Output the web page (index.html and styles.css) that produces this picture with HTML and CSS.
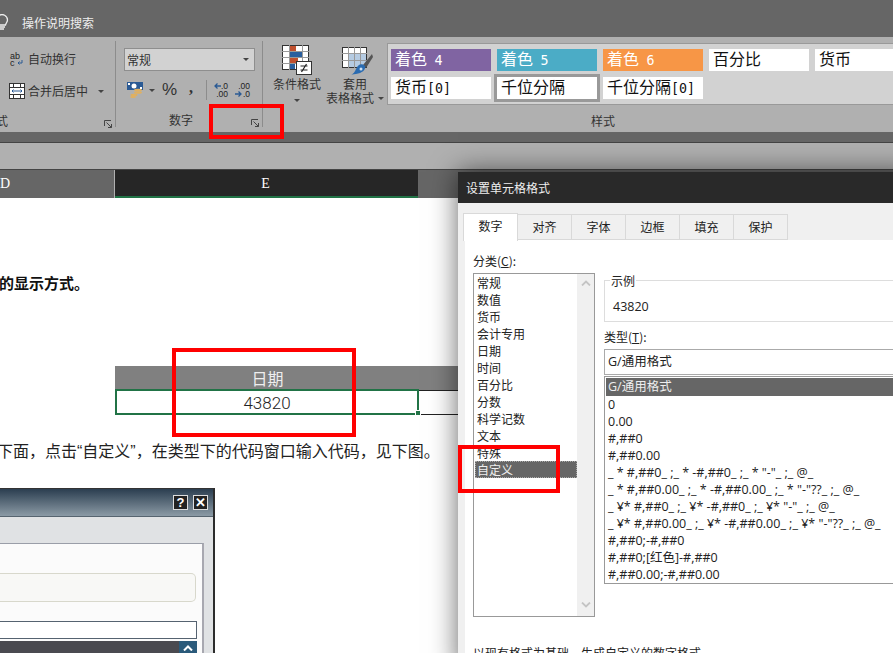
FILE: index.html
```html
<!DOCTYPE html>
<html lang="zh-CN">
<head>
<meta charset="utf-8">
<title>设置单元格格式</title>
<link rel="stylesheet" href="styles.css">
</head>
<body>
<div class="page">
  <header class="titlebar">
    <svg class="bulb" width="9" height="16" viewBox="0 0 9 16"><path d="M-1 1.500a5.500 5.500 0 0 1 8.500 4.500c0 2-1.600 3-2 5H-1" fill="none" stroke="#eee" stroke-width="1.300"/><path d="M0 13h5M0 15h4" stroke="#eee" stroke-width="1.300"/></svg>
    <span class="search">操作说明搜索</span>
  </header>

  <section class="ribbon">
    <div class="group group-align">
      <div class="align-row row-wrap">
        <svg width="15" height="16" viewBox="0 0 15 16"><text x="1" y="7.500" class="ic-t">ab</text><text x="1" y="15" class="ic-t">c</text><path d="M13 9v3H9M10.500 10.500 9 12l1.500 1.500" fill="none" stroke="#2a5a94"/></svg>
        <span>自动换行</span>
      </div>
      <div class="align-row row-merge">
        <svg width="16" height="16" viewBox="0 0 16 16"><rect x=".5" y=".5" width="15" height="15" fill="#fff" stroke="#333"/><path d="M0 4.500h16M0 11.500h16M4.500 0v4M11.500 0v4M4.500 12v4M11.500 12v4" stroke="#333"/><path d="M3 8h10M4.500 6.500 3 8l1.500 1.500M11.500 6.500 13 8l-1.500 1.500" fill="none" stroke="#2a5a94"/></svg>
        <span>合并后居中</span>
        <i class="caret caret-merge"></i>
      </div>
      <div class="group-foot foot-align"><span class="cut">式</span><svg class="launcher" width="8" height="8" viewBox="0 0 8 8"><path d="M.5 6V.5H7M2.500 2.500l5 5M4 7.500h3.500V4" fill="none" stroke="#444"/></svg></div>
    </div>

    <div class="group group-number">
      <div class="select"><span>常规</span><i class="caret"></i></div>
      <div class="num-row">
        <svg class="ic-money" width="17" height="16" viewBox="0 0 17 16"><rect width="16" height="8" fill="#2a5a94"/><circle cx="7" cy="4" r="2.500" fill="#fff"/><rect x="1" y="1" width="2" height="2" fill="#fff"/><rect x="13" y="5" width="2" height="2" fill="#fff"/><ellipse cx="11" cy="8" rx="4" ry="1.300" fill="#e0b060"/><ellipse cx="11" cy="10.500" rx="4" ry="1.300" fill="#e0b060"/><ellipse cx="7" cy="13" rx="3.500" ry="1.300" fill="#e0b060"/><ellipse cx="6" cy="15" rx="3" ry="1" fill="#e0b060"/></svg>
        <i class="caret caret-money"></i>
        <span class="pct">%</span>
        <span class="comma">,</span>
        <i class="num-sep"></i>
        <div class="dec"><span class="dec-a">.0</span><span>.00</span><svg class="dec-arrow" width="7" height="6" viewBox="0 0 7 6"><path d="M7 3H1M3.500.5 1 3l2.500 2.500" fill="none" stroke="#2a5a94" stroke-width="1.300"/></svg></div>
        <div class="dec dec-right"><span>.00</span><span class="dec-a">.0</span><svg class="dec-arrow" width="7" height="6" viewBox="0 0 7 6"><path d="M0 3h6M3.500.5 6 3 3.500 5.500" fill="none" stroke="#2a5a94" stroke-width="1.300"/></svg></div>
      </div>
      <div class="group-foot foot-number"><span>数字</span><svg class="launcher" width="8" height="8" viewBox="0 0 8 8"><path d="M.5 6V.5H7M2.500 2.500l5 5M4 7.500h3.500V4" fill="none" stroke="#444"/></svg></div>
    </div>

    <div class="group-tools">
      <div class="tool tool-cond">
        <svg width="30" height="30" viewBox="0 0 30 30"><rect x=".5" y=".5" width="26" height="24" fill="#fff" stroke="#333"/><path d="M0 6.500h27M0 12.500h27M0 18.500h27M7.500 0v25M20.500 0v25" stroke="#999"/><rect x="8" y="1" width="6" height="5" fill="#c0502e"/><rect x="8" y="7" width="12" height="5" fill="#2a5f9e"/><rect x="8" y="13" width="8" height="5" fill="#c0502e"/><rect x="8" y="19" width="5" height="5" fill="#2a5f9e"/><rect x="14.500" y="16.500" width="15" height="13" fill="#fff" stroke="#333"/><path d="M18.500 21h7M18.500 25h7M24.500 19l-5 8" stroke="#222" stroke-width="1.200" fill="none"/></svg>
        <span class="tool-l1">条件格式</span>
        <i class="caret"></i>
      </div>
      <div class="tool tool-table">
        <svg width="31" height="30" viewBox="0 0 31 30"><rect x=".5" y=".5" width="24" height="20" fill="#fff" stroke="#333"/><rect x="7" y="7" width="17" height="13" fill="#b5cbe2"/><path d="M0 6.500h25M0 13.500h25M6.500 0v21M12.500 0v21M18.500 0v21" stroke="#999"/><path d="M30 7 21 18l3 3L31 10z" fill="#555"/><path d="M14 22c2-5 6-6 9-3 1 4-3 7-9 8-3 0-5 1-5 1 2-1 4-3 5-6z" fill="#2a6bb0"/><circle cx="19" cy="22" r="1.500" fill="#cfe0f0"/></svg>
        <span class="tool-l1">套用</span>
        <span class="tool-l2">表格格式<i class="caret caret-inline"></i></span>
      </div>
    </div>

    <div class="group-styles">
      <div class="gallery">
        <span class="cell c-purple">着色 <em>4</em></span>
        <span class="cell c-blue">着色 <em>5</em></span>
        <span class="cell c-orange">着色 <em>6</em></span>
        <span class="cell">百分比</span>
        <span class="cell">货币</span>
        <span class="cell">货币<b>[0]</b></span>
        <span class="cell c-sel">千位分隔</span>
        <span class="cell">千位分隔<b>[0]</b></span>
      </div>
      <div class="styles-foot">样式</div>
    </div>
  </section>

  <div class="strip"></div>
  <div class="formula"></div>

  <div class="colhead">
    <span class="col-d">D</span>
    <span class="col-e">E</span>
  </div>

  <main class="sheet">
    <p class="lead">的显示方式。</p>
    <div class="tbl-head"><span>日期</span></div>
    <div class="tbl-row">
      <div class="tbl-cell">43820<i class="handle"></i></div>
    </div>
    <p class="note">下面，点击“自定义”，在类型下的代码窗口输入代码，见下图。</p>
    <div class="shot">
      <div class="shot-title">
        <span class="shot-btn">?</span>
        <span class="shot-btn">✕</span>
      </div>
      <div class="shot-body">
        <div class="shot-panel">
          <div class="shot-groupbox"></div>
          <div class="shot-input"></div>
          <div class="shot-list"><span class="shot-up"><svg width="10" height="6" viewBox="0 0 10 6"><path d="M1 5.500 5 1.500 9 5.500" fill="none" stroke="#fff" stroke-width="2"/></svg></span></div>
        </div>
      </div>
    </div>
  </main>

  <aside class="dialog">
    <div class="dlg-title">设置单元格格式</div>
    <div class="dlg-tabs">
      <span class="tab tab-on">数字</span>
      <span class="tab">对齐</span>
      <span class="tab">字体</span>
      <span class="tab">边框</span>
      <span class="tab">填充</span>
      <span class="tab">保护</span>
    </div>
    <div class="dlg-panel">
      <div class="dlg-cols">
        <div class="cat">
          <div class="lab">分类(<u>C</u>):</div>
          <div class="catbox">
            <ul class="catlist">
              <li>常规</li><li>数值</li><li>货币</li><li>会计专用</li><li>日期</li><li>时间</li><li>百分比</li><li>分数</li><li>科学记数</li><li>文本</li><li>特殊</li><li class="cat-on">自定义</li>
            </ul>
            <div class="scroll">
              <svg width="10" height="6" viewBox="0 0 10 6"><path d="M1 5.500 5 1.500 9 5.500" fill="none" stroke="#c4c4c4" stroke-width="1.800"/></svg>
              <svg width="10" height="6" viewBox="0 0 10 6"><path d="M1 .5 5 4.500 9 .5" fill="none" stroke="#c4c4c4" stroke-width="1.800"/></svg>
            </div>
          </div>
        </div>
        <div class="fmt">
          <div class="sample"><span class="sample-lab">示例</span><span class="sample-val">43820</span></div>
          <div class="lab lab-type">类型(<u>T</u>):</div>
          <div class="type-input">G/通用格式</div>
          <ul class="typelist">
            <li class="type-on">G/通用格式</li>
            <li>0</li>
            <li>0.00</li>
            <li>#,##0</li>
            <li>#,##0.00</li>
            <li>_ * #,##0_ ;_ * -#,##0_ ;_ * "-"_ ;_ @_</li>
            <li>_ * #,##0.00_ ;_ * -#,##0.00_ ;_ * "-"??_ ;_ @_</li>
            <li>_ ¥* #,##0_ ;_ ¥* -#,##0_ ;_ ¥* "-"_ ;_ @_</li>
            <li>_ ¥* #,##0.00_ ;_ ¥* -#,##0.00_ ;_ ¥* "-"??_ ;_ @_</li>
            <li>#,##0;-#,##0</li>
            <li>#,##0;[红色]-#,##0</li>
            <li>#,##0.00;-#,##0.00</li>
          </ul>
        </div>
      </div>
      <p class="dlg-note">以现有格式为基础，生成自定义的数字格式。</p>
    </div>
  </aside>

  <div class="mark mark-launcher"></div>
  <div class="mark mark-date"></div>
  <div class="mark mark-custom"></div>
</div>
</body>
</html>
```
FILE: styles.css
```css
* { box-sizing: border-box; }
html, body { margin: 0; padding: 0; }
body { background: #fff; font-family: "Noto Sans CJK SC", "Liberation Sans", sans-serif; color: #222; }
ul { list-style: none; margin: 0; padding: 0; }
p { margin: 0; }
.page { position: relative; width: 893px; height: 653px; overflow: hidden; }

.titlebar { height: 37px; background: #666; display: flex; align-items: center; padding-top: 7px; color: #eee; font-size: 12px; }
.bulb { margin-right: 13px; flex: none; }

.ribbon { height: 95px; background: #b0b0b0; display: flex; font-size: 12px; color: #333; }
.caret { display: inline-block; width: 0; height: 0; border: 3px solid transparent; border-top: 3px solid #444; border-bottom: 0; }

.group { position: relative; display: flex; flex-direction: column; border-right: 1px solid #8c8c8c; margin-top: 4px; height: 86px; flex: none; }
.group-align { width: 116px; padding-left: 9px; }
.align-row { display: flex; align-items: center; gap: 4px; height: 18px; line-height: 18px; white-space: nowrap; }
.row-merge { gap: 3px; }
.row-wrap { margin-top: 9px; }
.row-merge { margin-top: 14px; }
.caret-merge { margin-left: 7px; }
.ic-t { font: 9px "Liberation Sans", sans-serif; fill: #222; }
.group-foot { display: flex; align-items: center; margin-top: auto; height: 20px; line-height: 20px; }
.foot-align { margin-left: -9px; padding-right: 3px; justify-content: space-between; margin-top: 11px; }
.cut { margin-left: -4px; }
.launcher { flex: none; margin-top: 5px; }

.group-number { width: 147px; padding-left: 8px; }
.select { width: 131px; height: 23px; margin-top: 7px; background: #d2d2d2; border: 1px solid #8e8e8e; display: flex; align-items: center; justify-content: space-between; padding: 0 5px 0 2px; line-height: 21px; }
.num-row { display: flex; align-items: center; height: 20px; margin-top: 9px; padding-left: 3px; }
.caret-money { margin-left: 5px; }
.pct { margin-left: 7px; font: 17px "Liberation Sans", sans-serif; color: #333; width: 16px; }
.comma { margin-left: 11px; font: bold 16px "Liberation Serif", serif; color: #333; width: 4px; margin-top: -5px; }
.num-sep { width: 1px; height: 20px; background: #8c8c8c; margin-left: 13px; }
.dec { position: relative; margin-left: 7px; width: 14px; height: 16px; display: flex; flex-direction: column; align-items: flex-end; font: 8.500px/8px "Liberation Sans", sans-serif; color: #222; }
.dec-right { margin-left: 8px; }
.dec-arrow { position: absolute; left: 0; top: 1px; }
.dec-right .dec-arrow { top: 9px; left: -1px; }
.foot-number { justify-content: flex-end; gap: 58px; padding-right: 3px; margin-top: 10px; }

.group-tools { width: 124px; display: flex; flex: none; height: 86px; margin-top: 4px; padding-left: 10px; }
.tool { display: flex; flex-direction: column; align-items: center; line-height: 14px; white-space: nowrap; }
.tool-cond { width: 48px; padding-top: 4px; }
.tool-cond svg { margin-bottom: 2px; }
.tool-cond .caret { margin-top: 8px; }
.tool-table { width: 57px; margin-left: 5px; padding-top: 6px; align-items: flex-start; }
.tool-table svg { margin-left: 16px; }
.tool-l1 { line-height: 14px; }
.tool-table .tool-l1 { margin-left: 17px; margin-top: 0; }
.tool-l2 { display: flex; align-items: center; gap: 4px; }
.caret-inline { margin-top: 0; }

.group-styles { flex: 1; min-width: 0; display: flex; flex-direction: column; }
.gallery { height: 62px; margin-top: 6px; margin-right: -20px; background: #d2d2d2; border: 1px solid #999; border-right: 0; padding: 5px 0 0 3px; display: grid; grid-template-columns: repeat(5, 100px); grid-auto-rows: 22px; gap: 6px; }
.cell { background: #fff; color: #111; font-size: 16px; line-height: 19px; padding-left: 4px; white-space: nowrap; }
.cell em { font: normal 13.300px "DejaVu Sans Mono", monospace; margin-left: 4px; }
.cell b { font: normal 13.300px "DejaVu Sans Mono", monospace; }
.c-purple { background: #8064a2; color: #fff; }
.c-blue { background: #4bacc6; color: #fff; }
.c-orange { background: #f79646; color: #fff; }
.c-sel { outline: 3px solid #999; }
.styles-foot { width: 432px; text-align: center; font-size: 12px; margin-top: 6px; line-height: 20px; }

.strip { height: 10px; background: #666; }
.formula { height: 28px; background: #b0b0b0; border-top: 1px solid #444; border-bottom: 1px solid #444; }
.colhead { height: 28px; background: #666; display: flex; color: #fff; font: 14px/28px "Liberation Serif", serif; }
.col-d { width: 115px; padding-left: 0; border-right: 1px solid #b0b0b0; }
.col-e { width: 303px; background: #262626; border-bottom: 2px solid #217346; text-align: center; padding-right: 2px; }

.sheet { height: 456px; background: #fff; display: flex; flex-direction: column; color: #222; }
.lead { margin-top: 75px; margin-left: -1px; height: 20px; font-size: 15px; font-weight: 700; line-height: 20px; color: #111; white-space: nowrap; }
.tbl-head { margin-top: 73px; margin-left: 115px; height: 24px; width: 343px; background: #808080; color: #eee; font-size: 16px; line-height: 24px; }
.tbl-head span { display: block; width: 305px; text-align: center; }
.tbl-row { margin-left: 115px; width: 343px; height: 25px; border-bottom: 1px solid #222; }
.tbl-cell { position: relative; width: 304px; height: 26px; margin-top: -1px; border: 2px solid #217346; text-align: center; font: 300 17px/24px Roboto, "Liberation Sans", sans-serif; color: #222; }
.tbl-row { border-top: 0; background: linear-gradient(#222, #222) 303px 0 / 40px 1px no-repeat; }
.handle { position: absolute; right: -4px; bottom: -3px; width: 6px; height: 6px; background: #217346; border: 1px solid #fff; }
.note { margin-top: 25px; margin-left: -3px; height: 24px; font-family: "Liberation Sans", "Noto Sans CJK SC", sans-serif; font-size: 16px; line-height: 24px; white-space: nowrap; color: #222; }

.shot { margin-top: 24px; width: 215px; flex: 1; display: flex; flex-direction: column; border-top: 1px solid #333; border-right: 2px solid #2c2c2c; }
.shot-title { height: 28px; background: linear-gradient(#2b3e50, #8b9aa5); border-bottom: 1px solid #56646f; display: flex; justify-content: flex-end; align-items: center; gap: 5px; padding-right: 5px; }
.shot-btn { width: 15px; height: 15px; background: #222; border: 1px solid #ddd; color: #fff; font: bold 13px/13px "Liberation Sans", sans-serif; text-align: center; }
.shot-body { flex: 1; background: #e0e2e4; padding: 26px 9px 0 0; }
.shot-panel { height: 100%; background: #fbfbfb; border-top: 1px solid #9a9ea8; border-right: 2px solid #a8a8b0; padding: 29px 6px 0 0; }
.shot-groupbox { height: 29px; background: #f8f8f6; border: 1px solid #d8d8cc; border-left: 0; border-radius: 0 5px 5px 0; }
.shot-input { height: 18px; margin-top: 19px; background: #fff; border: 1px solid #556270; border-left: 0; margin-right: -1px; }
.shot-list { height: 20px; margin-top: 2px; margin-right: -1px; background: #4a4a50; display: flex; justify-content: flex-end; }
.shot-up { width: 18px; height: 14px; background: #2a5a7a; display: flex; justify-content: center; align-items: center; }

.dialog { position: absolute; left: 458px; top: 172px; width: 460px; height: 500px; background: #f0f0f0; box-shadow: 0 0 26px rgba(0,0,0,.6); display: flex; flex-direction: column; font-size: 12px; color: #222; }
.dlg-title { height: 31px; background: #292929; color: #eee; line-height: 31px; padding-left: 8px; flex: none; }
.dlg-tabs { display: flex; align-items: flex-end; height: 37px; padding-left: 5px; flex: none; }
.tab { width: 54px; height: 26px; border: 1px solid #d9d9d9; border-left: 0; border-bottom: 1px solid #d9d9d9; line-height: 24px; text-align: center; font-size: 12px; }
.tab-on { width: 55px; height: 28px; background: #fff; border: 1px solid #d9d9d9; border-bottom: 0; margin-bottom: -1px; position: relative; }
.dlg-panel { flex: 1; background: #fff; margin-left: 7px; padding: 12px 0 0 8px; }
.dlg-cols { display: flex; gap: 9px; height: 373px; }
.cat { width: 122px; flex: none; }
.lab { height: 21px; line-height: 18px; }
.catbox { height: 344px; border: 1px solid #999; display: flex; background: #fff; }
.catlist { flex: 1; padding: 0 0 0 1px; }
.catlist li { height: 17px; line-height: 17px; padding-left: 2px; }
.catlist .cat-on { background: #666; color: #eee; outline: 1px dotted #aaa; outline-offset: -1px; }
.scroll { width: 17px; background: #f0f0f0; display: flex; flex-direction: column; justify-content: space-between; align-items: center; padding: 6px 0 8px; }

.fmt { flex: 1; padding-top: 28px; min-width: 0; }
.sample { position: relative; height: 42px; border: 1px solid #ddd; border-right: 0; padding: 16px 0 0 8px; font: 12.500px/20px "Open Sans", "Liberation Sans", sans-serif; }
.sample-lab { position: absolute; left: 5px; top: -9px; background: #fff; padding: 0 1px; font: 12px/17px "Noto Sans CJK SC", sans-serif; }
.lab-type { margin-top: 6px; height: 21px; }
.type-input { height: 26px; border: 1px solid #aaa; border-right: 0; padding-left: 3px; line-height: 23px; font: 12.500px/23px "Open Sans", "Noto Sans CJK SC", sans-serif; }
.typelist { height: 208px; margin-top: 1px; border: 1px solid #999; border-right: 0; padding: 1px 0 0 1px; font: 12.500px "Open Sans", "Noto Sans CJK SC", sans-serif; }
.typelist li { height: 17px; line-height: 17px; padding-left: 2px; white-space: nowrap; }
.typelist .type-on { height: 18px; background: #666; color: #eee; }
.dlg-note { margin-top: 19px; line-height: 17px; white-space: nowrap; }

.mark { position: absolute; border: 4px solid #f00; }
.mark-launcher { left: 209px; top: 104px; width: 75px; height: 35px; }
.mark-date { left: 172px; top: 348px; width: 184px; height: 89px; }
.mark-custom { left: 458px; top: 445px; width: 102px; height: 48px; }
```
